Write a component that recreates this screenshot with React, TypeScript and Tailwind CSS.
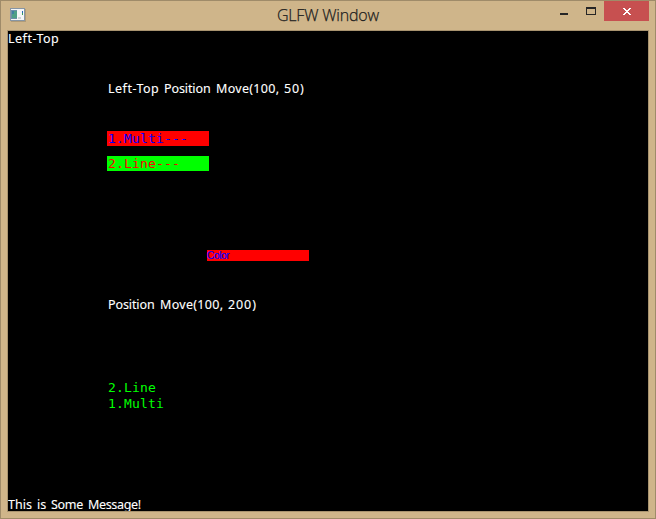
const label =
  "flex whitespace-pre font-['Noto_Sans',sans-serif] text-[12.5px] leading-[16px] text-white [-webkit-text-stroke:0.1px_#fff]";
const mono =
  "block whitespace-pre font-['DejaVu_Sans_Mono',monospace] text-[13px] tracking-[0.17px]";

function AppIcon() {
  return (
    <svg width="16" height="14" viewBox="0 0 16 14" shapeRendering="crispEdges">
      <rect width="15" height="13" fill="#8796a5" />
      <rect x="1" y="1" width="13" height="11" fill="#f4f6f7" />
      <rect x="15" y="1" width="1" height="13" fill="#b09b78" />
      <rect x="1" y="13" width="15" height="1" fill="#b09b78" />
      <rect x="1" y="2" width="6" height="9" fill="#6b8ea8" />
      <rect x="2" y="3" width="5" height="7" fill="#4d9f86" />
      <rect x="2" y="3" width="2" height="3" fill="#3f7fa0" />
      <rect x="8" y="9" width="3" height="2" fill="#cfd2d5" />
      <rect x="12" y="3" width="1" height="2" fill="#2568b8" />
      <rect x="12" y="5" width="1" height="2" fill="#39a05a" />
    </svg>
  );
}

function TitleBar() {
  return (
    <header className="flex h-[29px] items-start pl-[9px] pr-[6px]">
      <div className="mt-[7px] w-[46px]">
        <AppIcon />
      </div>
      <h1 className="mt-[3px] flex-1 whitespace-nowrap pl-[221px] font-['Open_Sans','Noto_Sans',sans-serif] text-[16px] font-light leading-[22px] tracking-[-0.2px] text-[#202020] [-webkit-text-stroke:0.25px_#202020]">
        GLFW Window
      </h1>
      <div className="mt-[12px] h-[2px] w-[8px] bg-[#262626]" />
      <div className="ml-[18px] mr-[8px] mt-[6px] h-[8px] w-[10px] border border-t-2 border-[#262626]" />
      <button aria-label="Close" className="flex h-[20px] w-[45px] justify-center bg-[#c75050] pt-[7px]">
        <svg width="8" height="7" viewBox="0 0 8 7" shapeRendering="crispEdges">
          <path
            fill="#fff"
            d="M0 0h2v1H0zM6 0h2v1H6zM1 1h2v1H1zM5 1h2v1H5zM2 2h4v1H2zM3 3h2v1H3zM2 4h4v1H2zM1 5h2v1H1zM5 5h2v1H5zM0 6h2v1H0zM6 6h2v1H6z"
          />
        </svg>
      </button>
    </header>
  );
}

export default function App() {
  return (
    <div className="h-[519px] w-[656px] overflow-hidden border border-[#9f8b69] bg-[#cfb58a]">
      <TitleBar />
      <main className="ml-[6px] flex h-[482px] w-[642px] flex-col items-start overflow-hidden border border-[#a8936f] bg-black">
        <p className={`${label} tracking-[0.5px]`}>Left-Top</p>
        <div className="flex flex-col items-start pl-[99px]">
          <p className={`${label} ml-px mt-[34px]`}>
            <span className="w-[56px] tracking-[0.5px]">Left-Top </span>
            <span className="w-[52px] tracking-[-0.1px]">Position </span>
            <span className="w-[68px] tracking-[0.3px]">Move(100, </span>
            <span className="tracking-[0.9px]">50)</span>
          </p>
          <p className={`${mono} mt-[34px] h-[15px] w-[102px] bg-[#ff0000] pl-px leading-[16px] text-[#0000ff]`}>
            1.Multi---
          </p>
          <p className={`${mono} mt-[10px] h-[15px] w-[102px] bg-[#00ff00] pl-px leading-[16px] text-[#ff0000]`}>
            2.Line---
          </p>
          <p className="ml-[100px] mt-[79px] h-[11px] w-[102px] bg-[#ff0000] font-['Liberation_Sans',sans-serif] text-[10px] leading-[12px] tracking-[-0.3px] text-[#0000ff] [-webkit-text-stroke:0.2px_#0000ff]">
            Color
          </p>
          <p className={`${label} ml-px mt-[36px]`}>
            <span className="w-[52px] tracking-[-0.1px]">Position </span>
            <span className="w-[68px] tracking-[0.3px]">Move(100, </span>
            <span className="tracking-[0.9px]">200)</span>
          </p>
          <p className={`${mono} ml-px mt-[67px] leading-[16px] text-[#00ff00]`}>2.Line</p>
          <p className={`${mono} ml-px leading-[16px] text-[#00ff00]`}>1.Multi</p>
        </div>
        <p className={`${label} -mb-[2px] mt-auto`}>
          <span className="w-[29px]">This </span>
          <span className="w-[14px]">is </span>
          <span className="w-[37px] tracking-[-0.3px]">Some </span>
          <span className="tracking-[-0.35px]">Message!</span>
        </p>
      </main>
    </div>
  );
}
